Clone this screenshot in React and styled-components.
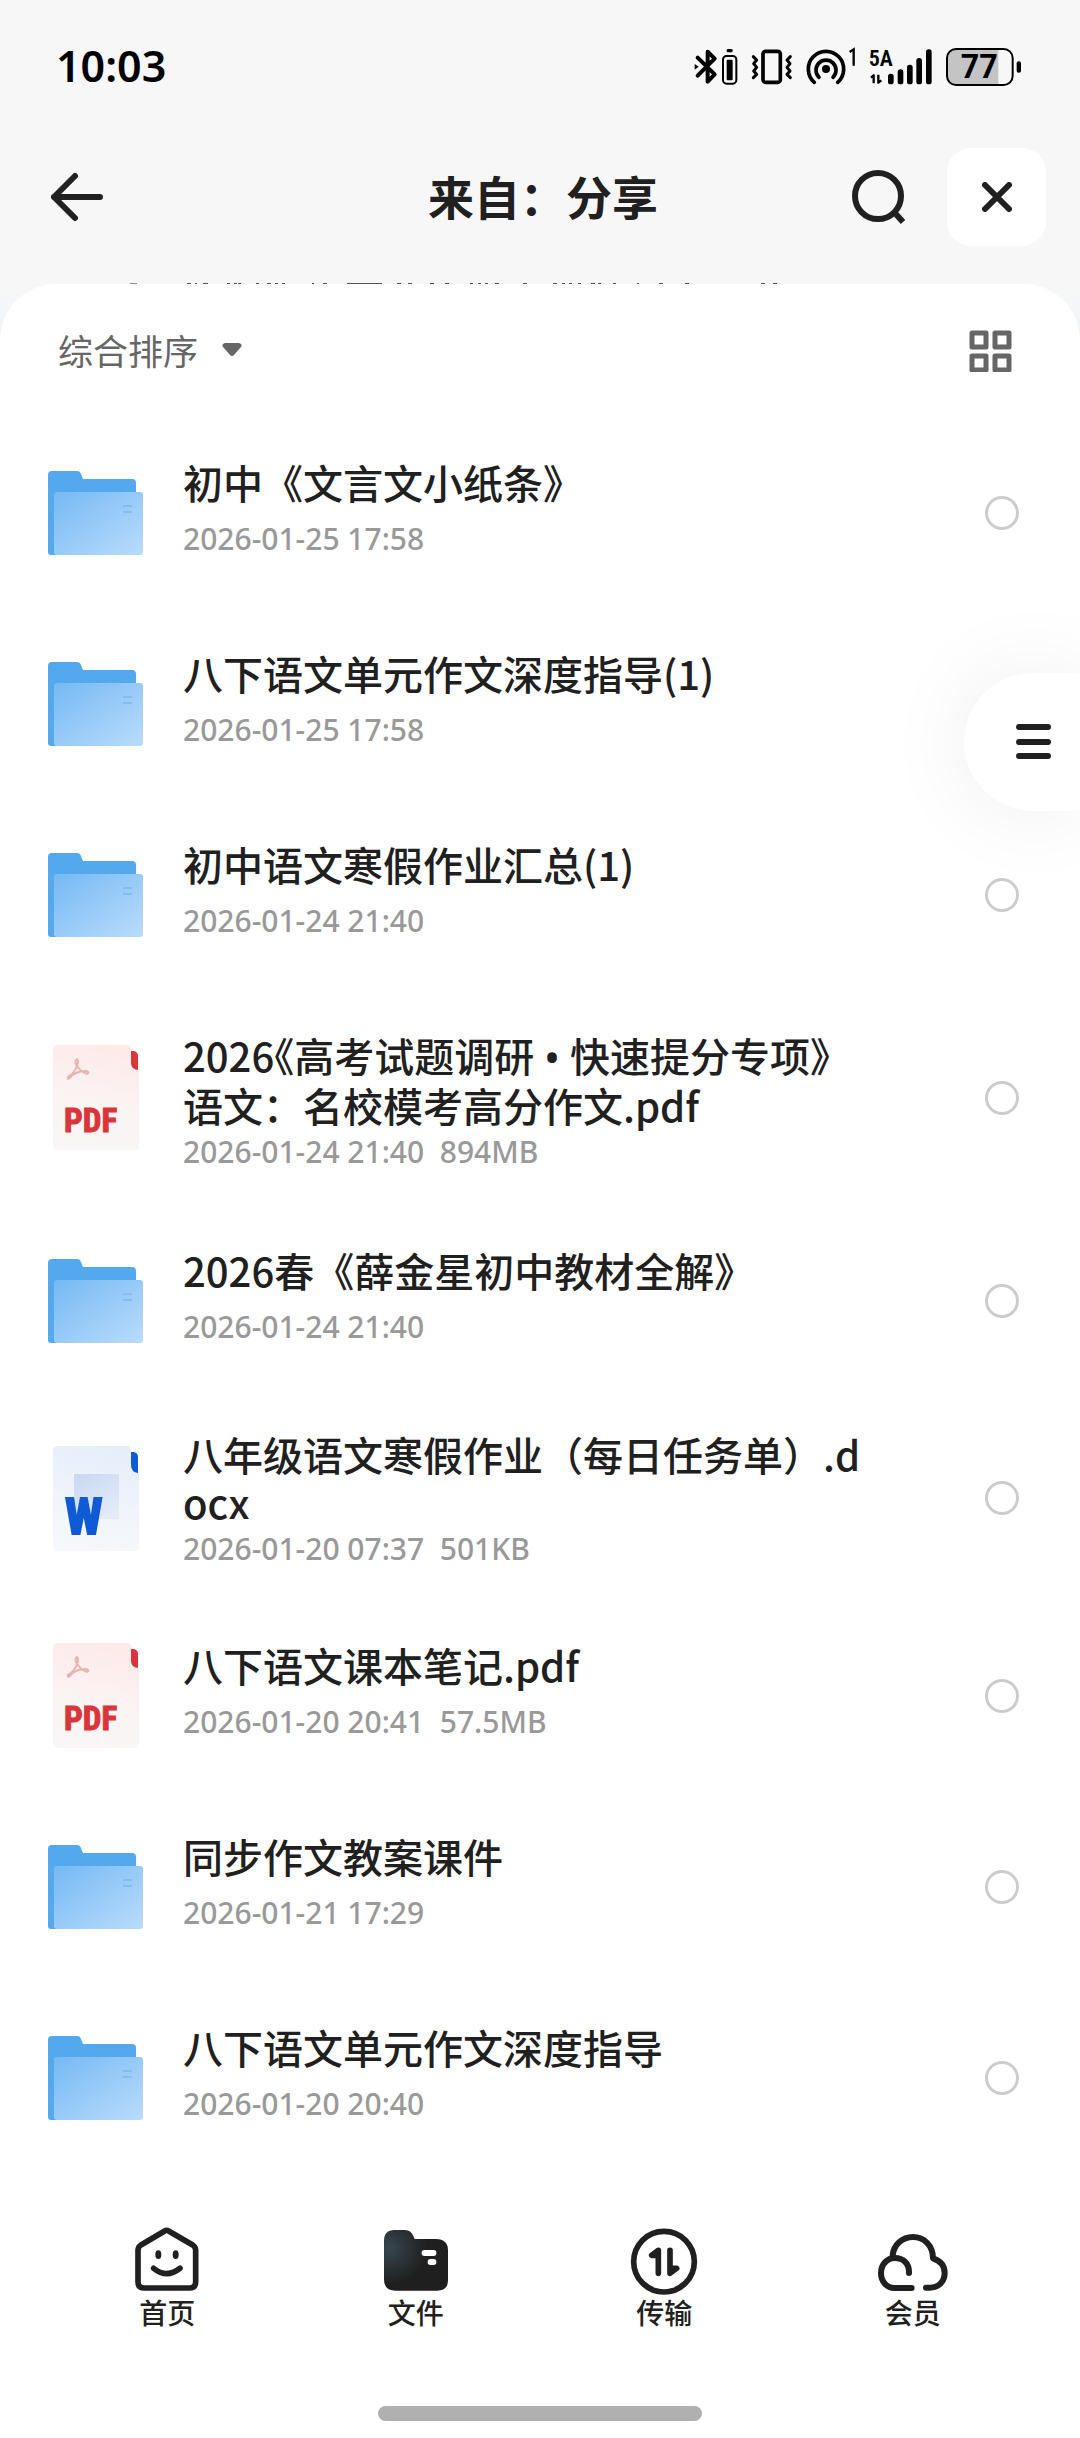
import { useState } from 'react';
import styled, { createGlobalStyle } from 'styled-components';

const GlobalStyle = createGlobalStyle`
  * {
    box-sizing: border-box;
  }

  body {
    margin: 0;
    background: #f7f7f7;
    color: #202020;
    font-family: "Noto Sans CJK SC", "Noto Sans", sans-serif;
  }

  button {
    padding: 0;
    border: none;
    background: none;
    color: inherit;
    font: inherit;
    cursor: pointer;
  }

  svg {
    display: block;
    flex: none;
  }
`

const Page = styled.div`
  position: relative;
  min-height: 100vh;
  display: flex;
  flex-direction: column;
  overflow: hidden;
`

const StatusBar = styled.div`
  height: 134px;
  padding: 0 58px 0 56px;
  display: flex;
  align-items: center;
  justify-content: space-between;
  color: #000;
`

const Time = styled.time`
  padding-bottom: 2px;
  font-family: "Noto Sans", sans-serif;
  font-size: 43px;
  font-weight: 600;
  line-height: 48px;
`

const StatusIcons = styled.div`
  display: flex;
  gap: 12px;
`

const Header = styled.header`
  padding: 14px 34px 37px 40px;
  display: grid;
  grid-template-columns: 1fr auto 1fr;
  align-items: center;
`

const Title = styled.h1`
  margin: 0;
  padding-bottom: 4px;
  font-size: 46px;
  font-weight: 700;
  line-height: 56px;
`

const BackButton = styled.button`
  justify-self: start;
  padding-left: 10px;
`

const HeaderActions = styled.div`
  display: flex;
  align-items: center;
  justify-content: flex-end;
  gap: 40px;
`

const CloseButton = styled.button`
  width: 99px;
  height: 98px;
  display: flex;
  align-items: center;
  justify-content: center;
  border-radius: 24px;
  background: #fff;
`

const SheetBackdrop = styled.div`
  flex: 1;
  display: flex;
  background: linear-gradient(#f7f7f7, #f0f5f8 60px);
`

const Sheet = styled.main`
  flex: 1;
  min-width: 0;
  display: flex;
  flex-direction: column;
  border-radius: 56px 56px 0 0;
  background: #fff;
`

const Toolbar = styled.div`
  height: 133px;
  padding: 0 68px 0 58px;
  display: flex;
  align-items: center;
  justify-content: space-between;
  color: #666;
`

const SortButton = styled.button`
  display: flex;
  align-items: center;
  gap: 24px;
  padding-bottom: 2px;
  font-size: 35px;
  line-height: 44px;
`

const FileList = styled.ul`
  margin: 0;
  padding: 0;
  list-style: none;
`

const rowHeights = { single: '191px', double: '215px', compact: '204px' }

const FileRow = styled.li`
  height: ${(props) => rowHeights[props.$size]};
  padding: 0 61px 0 48px;
  display: flex;
  align-items: center;
`

const IconBox = styled.div`
  width: 95px;
  margin-right: 40px;
  display: flex;
  flex: none;
  justify-content: center;
`

const FileInfo = styled.label`
  flex: 1;
  min-width: 0;
  align-self: flex-start;
  margin-right: 112px;
  padding-top: ${(props) => (props.$size === 'compact' ? '34px' : '41px')};
`

const FileName = styled.span`
  display: block;
  font-size: 40px;
  font-weight: 500;
  line-height: 48px;
  word-break: break-all;
`

const HalfMark = styled.span`
  font-feature-settings: "halt";
`

const Bullet = styled.span`
  font-family: "Noto Sans", sans-serif;
`

const FileMeta = styled.span`
  display: block;
  margin-top: ${(props) => (props.$size === 'single' ? '15px' : '5px')};
  color: #999;
  font-family: "Noto Sans", sans-serif;
  font-size: 30px;
  font-weight: 500;
  line-height: 36px;
  white-space: pre;
`

const SelectBox = styled.input`
  appearance: none;
  flex: none;
  width: 34px;
  height: 34px;
  margin: 0;
  border: 3px solid #ccc;
  border-radius: 50%;
  background: #fff;

  &:checked {
    border: 10px solid #1677ff;
  }
`

const MenuButton = styled.button`
  position: absolute;
  top: 673px;
  right: 0;
  width: 116px;
  height: 138px;
  padding-right: 29px;
  display: flex;
  align-items: center;
  justify-content: flex-end;
  border-radius: 69px 0 0 69px;
  background: #fff;
  box-shadow: 0 0 90px rgba(0, 0, 0, 0.07);
`

const TabBar = styled.nav`
  margin-top: auto;
  padding: 54px 43px 0;
  display: flex;
`

const TabLink = styled.a`
  flex: 1;
  display: flex;
  flex-direction: column;
  align-items: center;
  color: #202020;
  font-size: 28px;
  font-weight: 500;
  line-height: 34px;
  text-decoration: none;
`

const HomeBar = styled.div`
  width: 30%;
  height: 15px;
  margin: 77px auto 17px;
  border-radius: 8px;
  background: #b0b0b0;
`

const SvgLabel = styled.text`
  font-family: ${(props) => props.$family || 'Roboto, sans-serif'};
  font-weight: ${(props) => props.$weight || 700};
`

const narrow = '"Liberation Sans Narrow", "Roboto Condensed", Roboto, sans-serif'

/* ---------- status bar icons ---------- */

const BluetoothIcon = () => (
  <svg width="44" height="40" viewBox="96 51 132 120" fill="none" stroke="currentColor">
    <path d="M107 83 L158 133 L137 155 V65 L158 86 L107 137" strokeWidth="12" strokeLinejoin="round" strokeLinecap="round" />
    <path d="M98 102 L110 110 L98 119 Z" fill="currentColor" stroke="none" />
    <rect x="183" y="78" width="40" height="83" rx="11" strokeWidth="6" />
    <rect x="194" y="89" width="18" height="62" rx="3" fill="currentColor" stroke="none" />
    <rect x="194" y="57" width="18" height="10" rx="4" fill="currentColor" stroke="none" />
  </svg>
)

const VibrateIcon = () => (
  <svg width="44" height="40" viewBox="273 51 132 120" fill="none" stroke="currentColor" strokeLinejoin="round" strokeLinecap="round">
    <rect x="312" y="64" width="52" height="93" rx="8" strokeWidth="11" />
    <path d="M283 80 L293 90 L284 101 L293 112 L284 123 L293 133 L283 143" strokeWidth="9" />
    <path d="M394 80 L384 90 L393 101 L384 112 L393 123 L384 133 L394 143" strokeWidth="9" />
  </svg>
)

const HotspotIcon = () => (
  <svg width="50" height="40" viewBox="441 51 150 120" fill="none" stroke="currentColor" strokeWidth="11" strokeLinecap="round">
    <circle cx="501" cy="117" r="12" fill="currentColor" stroke="none" />
    <path d="M480 142 A30 30 0 1 1 522 142" />
    <path d="M466 157 A53 53 0 1 1 536 157" />
    <path d="M572 66 L584 58 V107" strokeWidth="7" strokeLinecap="butt" />
  </svg>
)

const SignalIcon = () => (
  <svg width="65" height="40" viewBox="627 51 195 120" fill="currentColor">
    <SvgLabel x="629" y="108" fontSize="66" $weight="600" $family={narrow}>5A</SvgLabel>
    <path d="M636 143 L644 136 V160 M658 134 V158 L667 151" fill="none" stroke="currentColor" strokeWidth="7" strokeLinejoin="round" />
    <rect x="687" y="131" width="17" height="32" rx="8" />
    <rect x="716" y="118" width="17" height="45" rx="8" />
    <rect x="744" y="104" width="17" height="59" rx="8" />
    <rect x="772" y="84" width="17" height="79" rx="8" />
    <rect x="801" y="58" width="17" height="105" rx="8" />
  </svg>
)

const BatteryIcon = () => (
  <svg width="77" height="40" viewBox="855 51 231 120">
    <path d="M1015 58 V164 H888 Q862 164 862 138 V84 Q862 58 888 58 Z" fill="#c4c4c4" />
    <rect x="861" y="57" width="197" height="108" rx="27" fill="none" stroke="currentColor" strokeWidth="6" />
    <rect x="1070" y="94" width="13" height="34" rx="6" fill="currentColor" />
    <SvgLabel x="958" y="145" fontSize="97" textAnchor="middle">77</SvgLabel>
  </svg>
)

/* ---------- header and toolbar icons ---------- */

const BackIcon = () => (
  <svg width="54" height="50" viewBox="0 0 54 50" fill="none" stroke="currentColor" strokeWidth="6" strokeLinecap="round" strokeLinejoin="round">
    <path d="M4 25 H50 M25 4 L4 25 L25 46" />
  </svg>
)

const SearchIcon = () => (
  <svg width="55" height="56" viewBox="0 0 55 56" fill="none" stroke="currentColor" strokeWidth="6">
    <circle cx="26" cy="27" r="23" />
    <path d="M42 43 L51 53" />
  </svg>
)

const CloseIcon = () => (
  <svg width="30" height="30" viewBox="0 0 30 30" stroke="currentColor" strokeWidth="6" strokeLinecap="round">
    <path d="M3 3 L27 27 M27 3 L3 27" />
  </svg>
)

const CaretIcon = () => (
  <svg width="20" height="14" viewBox="0 0 20 14" fill="currentColor">
    <path d="M3 0 H17 Q21 1 19 4 L12 12 Q10 14 8 12 L1 4 Q-1 1 3 0 Z" />
  </svg>
)

const GridIcon = () => (
  <svg width="43" height="42" viewBox="0 0 43 42" fill="none" stroke="currentColor" strokeWidth="5" strokeLinejoin="round">
    <rect x="3" y="3" width="14" height="14" />
    <rect x="26" y="3" width="14" height="14" />
    <rect x="3" y="26" width="14" height="14" />
    <rect x="26" y="26" width="14" height="14" />
  </svg>
)

const MenuIcon = () => (
  <svg width="35" height="36" viewBox="0 0 35 36" stroke="currentColor" strokeWidth="6" strokeLinecap="round">
    <path d="M3 3 H32 M3 18 H32 M3 32 H32" />
  </svg>
)

// top edge of the breadcrumb that is scrolled under the sheet: [x, width]
const crumbMarks = [
  [187, 4], [195, 2], [203, 5], [227, 3], [234, 3], [238, 3], [256, 3], [267, 4], [275, 3],
  [282, 3], [312, 2], [323, 4], [347, 35], [397, 4], [408, 4], [430, 4], [445, 4], [470, 3],
  [478, 3], [485, 3], [495, 4], [523, 4], [553, 4], [562, 3], [569, 3], [578, 3], [591, 4],
  [598, 3], [613, 3], [637, 2], [659, 4], [685, 4], [761, 4], [773, 4],
]

const CrumbEdge = () => (
  <svg width="100%" height="1" viewBox="0 0 1080 1" preserveAspectRatio="xMidYMid slice" aria-hidden="true">
    <rect x="130" width="7" height="1" fill="#a08a78" />
    {crumbMarks.map(([x, width]) => (
      <rect key={x} x={x} width={width} height="1" fill="#555" />
    ))}
  </svg>
)

/* ---------- file type icons ---------- */

const FolderIcon = () => (
  <svg width="95" height="84" viewBox="0 0 95 84">
    <defs>
      <linearGradient id="folderFront" x1="0" y1="0" x2="1" y2="1">
        <stop offset="0" stopColor="#76b9f3" />
        <stop offset="1" stopColor="#b9dcfd" />
      </linearGradient>
    </defs>
    <path d="M4 0 H29 Q32 0 33 3 L35 8 H84 Q88 8 88 12 V84 H3 Q0 84 0 81 V4 Q0 0 4 0 Z" fill="#54a9ee" />
    <rect x="6" y="21" width="89" height="63" rx="3" fill="url(#folderFront)" />
    <path d="M75 35 H84 M75 41 H84" stroke="#83bdf0" strokeWidth="2" />
  </svg>
)

const PdfIcon = () => (
  <svg width="86" height="105" viewBox="0 0 86 105">
    <defs>
      <linearGradient id="pdfPage" x1="0.6" y1="0" x2="0.4" y2="1">
        <stop offset="0" stopColor="#fdeae9" />
        <stop offset="0.55" stopColor="#fbf4f3" />
        <stop offset="1" stopColor="#f8f6f6" />
      </linearGradient>
    </defs>
    <path d="M5 0 H74 Q78 0 78 5 V19 Q78 24 86 25 V101 Q86 105 82 105 H5 Q0 105 0 100 V5 Q0 0 5 0 Z" fill="url(#pdfPage)" />
    <path d="M78 6 H81 Q85 7 85 11 V25 Q78 24 78 18 Z" fill="#d9353a" />
    <path d="M24 14 Q21 16 24 21 Q28 27 34 29 Q37 27 33 26 Q22 26 17 33 Q14 35 15 32 Q21 29 24 21 Q26 16 24 14 Z" fill="none" stroke="#e8b4b3" strokeWidth="2" strokeLinejoin="round" />
    <SvgLabel x="11" y="87" fontSize="33" fill="#d9353a" stroke="#d9353a" $family={narrow}>PDF</SvgLabel>
  </svg>
)

const WordIcon = () => (
  <svg width="86" height="105" viewBox="0 0 86 105">
    <defs>
      <linearGradient id="wordPage" x1="0.6" y1="0" x2="0.4" y2="1">
        <stop offset="0" stopColor="#e6eefb" />
        <stop offset="0.6" stopColor="#f1f5fb" />
        <stop offset="1" stopColor="#f6f8fb" />
      </linearGradient>
      <linearGradient id="wordBlock" x1="0" y1="0" x2="0.6" y2="1">
        <stop offset="0" stopColor="#c8d8f1" />
        <stop offset="1" stopColor="#e3eaf8" />
      </linearGradient>
    </defs>
    <path d="M5 0 H74 Q78 0 78 5 V19 Q78 24 86 25 V101 Q86 105 82 105 H5 Q0 105 0 100 V5 Q0 0 5 0 Z" fill="url(#wordPage)" />
    <path d="M78 6 H81 Q85 7 85 11 V27 Q78 26 78 19 Z" fill="#0f5bd5" />
    <rect x="21" y="28" width="45" height="45" fill="url(#wordBlock)" />
    <SvgLabel x="12" y="88" fontSize="50" fill="#0f5bd5" stroke="#0f5bd5" strokeWidth="2" $family={narrow}>W</SvgLabel>
  </svg>
)

/* ---------- tab icons ---------- */

const HomeIcon = () => (
  <svg width="72" height="68" viewBox="95 81 216 204" fill="none" stroke="currentColor" strokeWidth="17" strokeLinecap="round">
    <path d="M196 93 Q202 89 208 93 L280 135 Q289 141 289 151 V246 Q289 264 271 264 H134 Q116 264 116 246 V151 Q116 141 125 135 Z" />
    <path d="M163 205 Q202 237 242 205" />
    <ellipse cx="177" cy="164" rx="9" ry="13" fill="currentColor" stroke="none" />
    <ellipse cx="229" cy="164" rx="9" ry="13" fill="currentColor" stroke="none" />
  </svg>
)

const FilesIcon = () => (
  <svg width="72" height="68" viewBox="840 81 216 204">
    <defs>
      <radialGradient id="filesTab" cx="0.08" cy="0.3" r="0.6">
        <stop offset="0" stopColor="#384650" />
        <stop offset="1" stopColor="#1f1f1f" />
      </radialGradient>
    </defs>
    <path d="M852 122 Q852 90 884 90 H915 Q933 90 940 108 L944 117 H1008 Q1044 117 1044 152 V240 Q1044 272 1012 272 H886 Q852 272 852 238 Z" fill="url(#filesTab)" />
    <rect x="965" y="150" width="44" height="18" rx="8" fill="#fff" />
    <rect x="983" y="177" width="26" height="18" rx="8" fill="#fff" />
  </svg>
)

const TransferIcon = () => (
  <svg width="72" height="68" viewBox="264 81 216 204" fill="none" stroke="currentColor" strokeWidth="17" strokeLinecap="round" strokeLinejoin="round">
    <circle cx="372" cy="185" r="91" />
    <path d="M355 220 V151 L335 166 H355" fill="currentColor" />
    <path d="M390 151 V220 L410 205 H390" fill="currentColor" />
  </svg>
)

const MemberIcon = () => (
  <svg width="72" height="68" viewBox="1010 81 216 204" fill="none" stroke="currentColor" strokeWidth="18" strokeLinecap="round" strokeLinejoin="round">
    <path d="M1057 166 C1060 135 1085 111 1118 111 C1152 111 1178 138 1178 175 C1200 182 1213 198 1213 219 C1213 245 1194 263 1168 263 H1157" />
    <path d="M1106 219 V215 C1106 190 1088 174 1064 174 C1040 174 1022 194 1022 219 C1022 245 1040 264 1062 264 H1114" />
  </svg>
)

const fileIcons = { folder: FolderIcon, pdf: PdfIcon, word: WordIcon }

const files = [
  { id: 1, type: 'folder', size: 'single', name: '初中《文言文小纸条》', meta: '2026-01-25 17:58' },
  { id: 2, type: 'folder', size: 'single', name: '八下语文单元作文深度指导(1)', meta: '2026-01-25 17:58' },
  { id: 3, type: 'folder', size: 'single', name: '初中语文寒假作业汇总(1)', meta: '2026-01-24 21:40' },
  {
    id: 4,
    type: 'pdf',
    size: 'double',
    name: <>2026<HalfMark>《</HalfMark>高考试题调研<Bullet> • </Bullet>快速提分专项》语文：名校模考高分作文.pdf</>,
    meta: '2026-01-24 21:40  894MB',
  },
  { id: 5, type: 'folder', size: 'single', name: '2026春《薛金星初中教材全解》', meta: '2026-01-24 21:40' },
  { id: 6, type: 'word', size: 'compact', name: '八年级语文寒假作业（每日任务单）.docx', meta: '2026-01-20 07:37  501KB' },
  { id: 7, type: 'pdf', size: 'single', name: '八下语文课本笔记.pdf', meta: '2026-01-20 20:41  57.5MB' },
  { id: 8, type: 'folder', size: 'single', name: '同步作文教案课件', meta: '2026-01-21 17:29' },
  { id: 9, type: 'folder', size: 'single', name: '八下语文单元作文深度指导', meta: '2026-01-20 20:40' },
]

const tabs = [
  { label: '首页', href: '#home', Icon: HomeIcon },
  { label: '文件', href: '#files', Icon: FilesIcon },
  { label: '传输', href: '#transfer', Icon: TransferIcon },
  { label: '会员', href: '#member', Icon: MemberIcon },
]

const FileItem = ({ file, checked, onToggle }) => {
  const Icon = fileIcons[file.type]

  return (
    <FileRow $size={file.size}>
      <IconBox><Icon /></IconBox>
      <FileInfo $size={file.size} htmlFor={`file-${file.id}`}>
        <FileName>{file.name}</FileName>
        <FileMeta $size={file.size}>{file.meta}</FileMeta>
      </FileInfo>
      <SelectBox
        type="checkbox"
        id={`file-${file.id}`}
        checked={checked}
        onChange={() => onToggle(file.id)}
      />
    </FileRow>
  )
}

const App = () => {
  const [selected, setSelected] = useState([])

  const toggleFile = (id) => {
    if (selected.includes(id)) {
      setSelected(selected.filter(item => item !== id))
    } else {
      setSelected([...selected, id])
    }
  }

  return (
    <>
      <GlobalStyle />
      <Page>
        <StatusBar>
          <Time>10:03</Time>
          <StatusIcons>
            <BluetoothIcon />
            <VibrateIcon />
            <HotspotIcon />
            <SignalIcon />
            <BatteryIcon />
          </StatusIcons>
        </StatusBar>
        <Header>
          <BackButton type="button" aria-label="返回"><BackIcon /></BackButton>
          <Title>来自：分享</Title>
          <HeaderActions>
            <button type="button" aria-label="搜索"><SearchIcon /></button>
            <CloseButton type="button" aria-label="关闭"><CloseIcon /></CloseButton>
          </HeaderActions>
        </Header>
        <CrumbEdge />
        <SheetBackdrop>
          <Sheet>
            <Toolbar>
              <SortButton type="button" aria-haspopup="menu">
                综合排序
                <CaretIcon />
              </SortButton>
              <button type="button" aria-label="网格视图"><GridIcon /></button>
            </Toolbar>
            <FileList>
              {files.map((file) => (
                <FileItem
                  key={file.id}
                  file={file}
                  checked={selected.includes(file.id)}
                  onToggle={toggleFile}
                />
              ))}
            </FileList>
            <TabBar>
              {tabs.map(({ label, href, Icon }) => (
                <TabLink key={href} href={href}>
                  <Icon />
                  {label}
                </TabLink>
              ))}
            </TabBar>
            <HomeBar />
          </Sheet>
        </SheetBackdrop>
        <MenuButton type="button" aria-label="菜单"><MenuIcon /></MenuButton>
      </Page>
    </>
  )
}

export default App;
